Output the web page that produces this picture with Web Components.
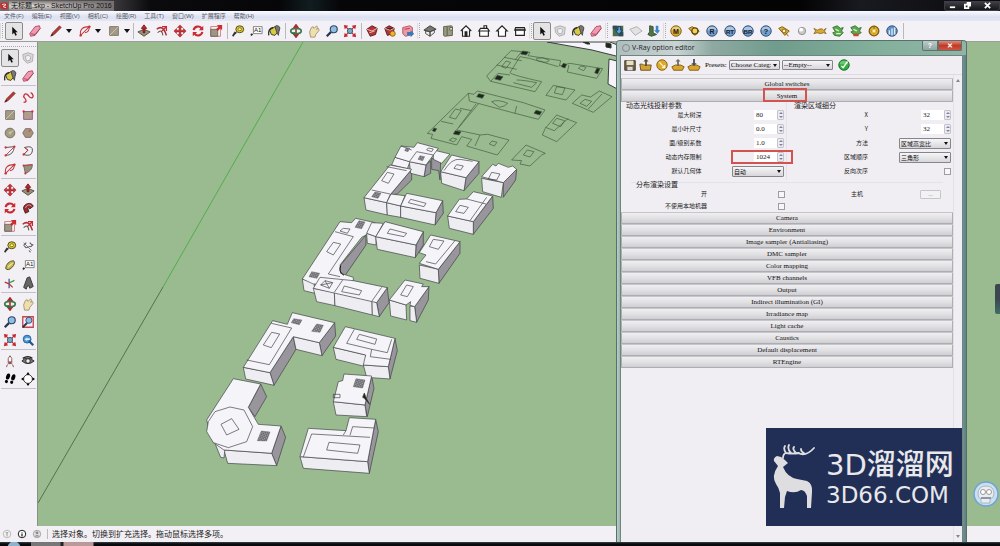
<!DOCTYPE html>
<html lang="zh-CN">
<head>
<meta charset="utf-8">
<title>无标题.skp - SketchUp Pro 2016</title>
<style>
  html, body { margin: 0; height: 100%; }
  body { font-family: "Liberation Sans", "Noto Sans CJK SC", sans-serif; overflow: hidden; background: #f0eef2; }
</style>
</head>
<body>
<sketch-app></sketch-app>
<script>
const define = (name, html, setup) => {
  const tpl = document.createElement('template');
  customElements.define(name, class extends HTMLElement {
    connectedCallback() {
      if (this.shadowRoot) return;
      this.attachShadow({ mode: 'open' });
      tpl.innerHTML = typeof html === 'function' ? html(this) : html;
      this.shadowRoot.append(tpl.content.cloneNode(true));
      if (setup) setup(this);
    }
  });
};

/* ---------- icons, drawn on a 16 x 16 grid ---------- */
const ball = (c1, c2, t, s = 8) => `<circle cx="8" cy="8" r="6" fill="${c1}" stroke="${c2}"/><path d="M3 7a5 4 0 0 1 10 0z" fill="#fff" opacity=".4"/><text x="8" y="11" font-size="${s}" font-weight="700" text-anchor="middle" fill="#1c1c20">${t}</text>`;
const gold = ['#d9ab2c', '#7d5c10'], blue = ['#6e9fd0', '#28466b'];
const tag = t => `<path d="M2 5l4-2 8 5-5 5z" fill="#dcae2d" stroke="#775610"/>${t}`;
const house = body => `<g fill="#fff" stroke="#222" stroke-width="1.3">${body}</g>`;
const ICONS = {
  select: '<path d="M6 3v9l2-2 1.600 3.400 1.700-.8L9.700 9.400h2.600z" fill="#111"/>',
  eraser: '<path d="M2 11l6-8 5-1 1 3-6 8-5 1z" fill="#ef9ab0" stroke="#a8455f"/><path d="M3 11l5 1 6-7" fill="none" stroke="#a8455f"/>',
  pencil: '<path d="M2 14l2-4 8-8 2 2-8 8z" fill="#b73a35" stroke="#6b1e1c" stroke-width=".7"/><path d="M2 14l1.500-3 1.500 1.500z" fill="#222"/>',
  free: '<path d="M3 14c4 0 3-3 1-5s0-6 3-4 2 4 5 4 2-5-1-6" fill="none" stroke="#c63239" stroke-width="1.500"/>',
  arc: '<path d="M3 13Q1 3 13 3L3 13M13 3Q13 9 8 10" fill="none" stroke="#bf3b42" stroke-width="1.200"/><circle cx="3" cy="13" r="1.400" fill="#c33"/><circle cx="13" cy="3" r="1.400" fill="#c33"/>',
  arc2: '<path d="M3 4L13 3Q12 13 3 13" fill="none" stroke="#444"/><path d="M3 13L13 3" stroke="#c33"/><circle cx="3" cy="4" r="1.300" fill="#c33"/><circle cx="3" cy="13" r="1.300" fill="#c33"/><circle cx="13" cy="3" r="1.300" fill="#c33"/>',
  arc3: '<path d="M4 4Q14 1 13 8T3 12L8 7z" fill="none" stroke="#444"/><path d="M3 12L8 7 4 4" fill="none" stroke="#c33"/><circle cx="3" cy="12" r="1.300" fill="#c33"/>',
  pie: '<path d="M3 4L13 3Q13 10 5 13z" fill="#9a9079" stroke="#666"/><path d="M3 4l10-1" stroke="#c33"/><circle cx="3" cy="4" r="1.200" fill="#c33"/><circle cx="5" cy="13" r="1.200" fill="#c33"/>',
  rect: '<path d="M3 3h10v10H3z" fill="#a39a86" stroke="#777063"/><path d="M3 13L13 3" stroke="#d4c9a6"/>',
  rrect: '<path d="M3 4h10v9H3z" fill="#aba18c" stroke="#858"/><path d="M3 4l10 9" stroke="#c87"/><circle cx="3" cy="4" r="1.300" fill="#c33"/><circle cx="13" cy="4" r="1.300" fill="#c33"/>',
  circle: '<circle cx="8" cy="8" r="5.500" fill="#a59b84" stroke="#6c665a"/><circle cx="8" cy="8" r="1.600" fill="#c9bd92"/><path d="M8 8l4-3" stroke="#ddd0a0"/>',
  polygon: '<path d="M5 3h6l3 5-3 5H5L2 8z" fill="#a39580" stroke="#7a6b5e"/><path d="M8 8l3-4" stroke="#c33"/><circle cx="8" cy="8" r="1.300" fill="#c86"/>',
  push: '<path d="M1 9l7-3 7 3-7 5z" fill="#9a917d" stroke="#4e4a40"/><path d="M8 1l3 4H9v5H7V5H5z" fill="#c4262e" stroke="#711"/>',
  offset: '<path d="M2 6Q9 0 13 13" fill="none" stroke="#b32a30" stroke-width="1.800"/><path d="M3 10Q8 5 9 13" fill="none" stroke="#555" stroke-width="1.200"/><path d="M7 9l6-6M8 3h5v5" fill="none" stroke="#c62a31" stroke-width="1.500"/>',
  move: '<path d="M8 1l3 3H9v3h3V5l3 3-3 3V9H9v3h2l-3 3-3-3h2V9H4v2L1 8l3-3v2h3V4H5z" fill="#cf2e36" stroke="#801a20" stroke-width=".5"/>',
  rotate: '<path d="M3 7a5 5 0 0 1 9-2M13 9a5 5 0 0 1-9 2" fill="none" stroke="#ca2b33" stroke-width="2.400"/><path d="M14 2v5H9zM2 14V9h5z" fill="#ca2b33"/>',
  follow: '<path d="M3 9C2 3 12 0 14 6L10 9C8 6 7 8 9 12L5 14z" fill="#9b2d31" stroke="#3b1c1c"/><path d="M5 8Q8 2 12 6" fill="none" stroke="#e8a0a0"/>',
  scale: '<path d="M2 3h11v11H2z" fill="#fff" stroke="#c66"/><path d="M2 6h8v8H2z" fill="#a0967f" stroke="#666"/><path d="M15 1v6l-2-2-3 3-2-2 3-3-2-2z" fill="#cc2a31"/>',
  tape: '<path d="M2 14l3-5 2 1z" fill="#333"/><ellipse cx="10" cy="6" rx="4.500" ry="4" fill="#dcca3c" stroke="#45400f"/><ellipse cx="10" cy="6" rx="2" ry="1.700" fill="#fff6a0" stroke="#776b10"/><path d="M5 9l-3 5" stroke="#333" stroke-width="2"/>',
  dims: '<path d="M3 6l3 3M9 12l2 2M6 3l-3 3M11 8l3-3M6 9l5-2M10 3l3 3" fill="none" stroke="#555" stroke-width="1.200"/><path d="M3 3l9 9" stroke="#777"/>',
  protract: '<path d="M3 12Q4 4 12 3q3 3-2 8-4 4-7 1z" fill="#c9ba4d" stroke="#46421e"/><path d="M6 10l5-4" stroke="#fff"/>',
  text: '<path d="M5 3h10v8H5zM5 11l-3 3" fill="#fff" stroke="#777"/><text x="10" y="9.500" font-size="7" text-anchor="middle" fill="#111">A1</text><circle cx="3" cy="12" r="1.200" fill="#222"/>',
  axes: '<path d="M7 14V3" stroke="#459" stroke-width="1.500"/><path d="M7 8l6-3" stroke="#393" stroke-width="1.500"/><path d="M7 9l-5-2M7 9l4 4" stroke="#b33" stroke-width="1.500"/>',
  text3d: '<path d="M3 13L7 2l3-1 4 11-4 2-1-3-2 1-1 3z" fill="#666" stroke="#333"/>',
  paint: '<path d="M3 7l6-4 5 4-5 6-4-1z" fill="#d8c843" stroke="#30301c"/><path d="M2 13Q1 5 7 4" fill="none" stroke="#333" stroke-width="1.600"/><path d="M9 3a3 3 0 0 1 5 4l-1 6-2-4z" fill="#777" stroke="#222" stroke-width=".7"/>',
  orbit: '<path d="M8 2v11M5 5l3-4 3 4M5 11l3 4 3-4" fill="#c33" stroke="#b5262f" stroke-width="1.800"/><ellipse cx="8" cy="8" rx="6" ry="3" fill="none" stroke="#3c7a4c" stroke-width="2"/><path d="M3 10l4 4V9z" fill="#2e7244"/>',
  pan: '<path d="M3 9l2-5 2-1 1 2 3-3 1 2-1 2 2-1 1 2-4 5-1 3-5 0z" fill="#efdfb0" stroke="#8c7c54" stroke-width=".8"/>',
  zoom: '<path d="M7 9l-5 5" stroke="#26364c" stroke-width="2.500"/><circle cx="10" cy="6" r="4" fill="#92bde2" stroke="#2d4966" stroke-width="1.300"/>',
  zoomwin: '<path d="M2 2h12v12H2z" fill="#eef" stroke="#c44" stroke-width="1.500"/><path d="M7 9l-5 5" stroke="#26364c" stroke-width="2.300"/><circle cx="9" cy="6" r="3.500" fill="#92bde2" stroke="#2d4966"/>',
  extents: '<path d="M1 1l5 1-4 4zM15 1l-1 5-4-4zM1 15l1-5 4 4zM15 15l-5-1 4-4z" fill="#c62730"/><path d="M3 3l10 10M13 3L3 13" stroke="#c62730" stroke-width="1.500"/><circle cx="8" cy="8" r="3" fill="#7ab" stroke="#357"/>',
  prev: '<circle cx="7" cy="7" r="4.500" fill="#4b9bd8" stroke="#225c93"/><path d="M9 9l5 5" stroke="#1f588c" stroke-width="2.500"/><path d="M4 7l3-2v1h3v2H7v1z" fill="#d6ecfb"/>',
  camera: '<path d="M8 2l2 3v6H6V5zM5 12l-1 3M11 12l1 3M6 9h4" fill="#fff" stroke="#7b4a4a"/><circle cx="8" cy="10" r="1.200" fill="#b33"/>',
  eye: '<path d="M1 8q6-7 14 0-7 6-14 0z" fill="#777" stroke="#222"/><circle cx="8" cy="8" r="2.600" fill="#eee" stroke="#222"/><path d="M2 5q6-4 11 0" fill="none" stroke="#222" stroke-width="1.500"/>',
  walk: '<g transform="rotate(18 8 8)"><ellipse cx="5" cy="6" rx="2.200" ry="3.600"/><circle cx="5" cy="12" r="1.800"/><ellipse cx="11" cy="5" rx="2.200" ry="3.600"/><circle cx="11" cy="11" r="1.800"/></g>',
  section: '<circle cx="8" cy="8" r="5" fill="#fff" stroke="#333"/><path d="M8 0l2 3H6zM8 16l2-3H6zM0 8l3-2v4zM16 8l-3-2v4z"/>',
  comp: '<path d="M2 4l6-2 6 2-1 8-6 2-4-4z" fill="#d8d8da" stroke="#aaa"/><path d="M5 6l4-1 2 2-1 4-4 0z" fill="#f3f3f3" stroke="#aaa"/>',
  ware: '<path d="M2 6l6-4 6 3-2 7-6 2z" fill="#b5343a" stroke="#4e1719"/><path d="M2 6l6 2 6-3M5 10l6-2" stroke="#f3c7c0" fill="none"/>',
  ware2: '<path d="M2 5l5-3 6 3-2 6-6 2z" fill="#b5343a" stroke="#4e1719"/><path d="M2 5l6 2 5-2" stroke="#f3c7c0"/><circle cx="11" cy="11" r="3" fill="#efb22f" stroke="#8b5d0b"/>',
  extw: '<path d="M2 4l8-2 3 2v8l-8 2-3-3z" fill="#ee99a4" stroke="#b54b58"/><path d="M7 9h4V7l4 4-4 4v-2H7z" fill="#3a78b8"/><path d="M4 6l6-1" stroke="#a34"/>',
  iso: '<path d="M1 7l7-5 7 4-7 3z" fill="#777a70" stroke="#333"/><path d="M3 8v3l5 3V9zM8 14l5-4V7L8 9z" fill="#efeee8" stroke="#444"/>',
  top: '<path d="M3 3l9-1 1 1v10l-9 1-1-1z" fill="#9c9c84" stroke="#55553f"/><path d="M7 3v10M10 4h3v3h-3z" fill="#eee" stroke="#55553f"/>',
  front: house('<path d="M2 8l6-6 6 6M4 7v7h8V7"/><path d="M7 9h2v5H7z" fill="#111"/>'),
  right: house('<path d="M2 8l2-3h8l2 3zM3 8h10v6H3zM8 5V2h3v3"/>'),
  back: house('<path d="M2 8l6-6 6 6h-2v6H4V8z"/>'),
  left: house('<path d="M2 7l1-3h10l1 3z" fill="#aaa"/><path d="M3 7h10v6H3z"/>'),
  map: '<path d="M2 2h12v12H2z" fill="#496b4e"/><path d="M2 2h5v4H2zM9 9h5v5H9z" fill="#2e4c58"/><path d="M8 3h3v4h2l-4 5-4-5h3z" fill="#58a5e0" stroke="#235"/>',
  plane: '<path d="M1 6l8-3 6 5-8 5z" fill="#e2e2e2" stroke="#aaa"/>',
  terrain: '<path d="M3 2l4 1v7l4 2-6 2-4-2 2-3z" fill="#4e7748" stroke="#344a2c"/><path d="M10 2h3v5h2l-3 4-4-4h2z" fill="#3f86c9"/>',
  m: ball(...gold, 'M'), r: ball(...blue, 'R'), rt: ball(...blue, 'RT', 7), br: ball(...blue, 'BR', 7), help: ball(...blue, '?', 9),
  frame: tag('<circle cx="9" cy="8" r="3.500" fill="#f2d35a" stroke="#5b430c" stroke-width="1.400"/>'),
  tag: tag('<circle cx="8" cy="8" r="2.200" fill="#fff3b8" stroke="#775610"/><path d="M10 10l3 4" stroke="#775610"/>'),
  sphere: '<circle cx="8" cy="8" r="4.200" fill="#c9c9c9" stroke="#8c8c8c"/><circle cx="7" cy="6.500" r="2.200" fill="#fff"/>',
  fish: '<path d="M1 5l4 2q5-3 7 0l3-2-2 3 2 3-3-1q-4 2-7 0l-4 1 2-3z" fill="#d8a92e" stroke="#765913" stroke-width=".8"/>',
  plant: '<path d="M2 4l5-2 4 3 3-1-2 4 2 2-4 4-6-1-2-3 3-1z" fill="#5aa84f" stroke="#37702f"/><path d="M5 6l4 2M6 11h5" stroke="#e4f6d6" stroke-width="1.500"/>',
  plant2: '<path d="M2 4l5-2 4 3 3-1-2 4 2 2-4 2H5L2 9l3-1z" fill="#5aa84f" stroke="#37702f"/><path d="M5 11h6v3H5z" fill="#c8462f"/><path d="M5 6l4 2" stroke="#e4f6d6" stroke-width="1.500"/>',
  sun: '<circle cx="8" cy="8" r="5.500" fill="#dfae2b" stroke="#7d5c10" stroke-width="1.500"/><path d="M8 2v9M5 8h6" stroke="#7d5c10"/><circle cx="8" cy="8" r="2" fill="#fff0a8"/>',
  dome: '<circle cx="8" cy="8" r="6" fill="#5e90c4" stroke="#28466b"/><path d="M5 12V7M8 13V5M11 12V4" stroke="#dce9f6" stroke-width="1.600"/>',
  save: '<path d="M2 3h12v11H2z" fill="#6f6046" stroke="#3c3427"/><path d="M4 3h8v5H4z" fill="#e8dfc3"/><path d="M5 10h6v4H5z" fill="#d8d8dc"/>',
  open: '<path d="M1 7h3l1 1h9l-1 6H2z" fill="#d2a23a" stroke="#6c4d10"/><path d="M8 1l3 3H9v5H7V4H5z" fill="#5a4c28"/>',
  reset: '<circle cx="8" cy="8" r="6" fill="#dfa92b" stroke="#805c12"/><path d="M5 5l6 6M11 8v3H8" stroke="#fff5cf" stroke-width="1.500" fill="none"/>',
  importi: '<path d="M1 10l4-2h6l4 2-2 4H3z" fill="#dba42e" stroke="#7c5810"/><path d="M8 1l3 3H9v5H7V4H5z" fill="#6f6a58"/>',
  exporti: '<path d="M1 10l4-2h6l4 2-2 4H3z" fill="#dba42e" stroke="#7c5810"/><path d="M8 9l3-3H9V1H7v5H5z" fill="#3f4a58"/>',
  ok: '<circle cx="8" cy="8" r="6" fill="#2fae3f" stroke="#13631f"/><path d="M3 7a5 4 0 0 1 10 0z" fill="#8ee08c" opacity=".6"/><path d="M5 9l2 2 5-7" fill="none" stroke="#fff" stroke-width="1.500"/>',
  geo: '<circle cx="8" cy="8" r="6" fill="#f2f2f2" stroke="#999"/><path d="M8 12V5M6 6h4" stroke="#999" stroke-width="1.500"/>',
  info: '<circle cx="8" cy="8" r="6" fill="#fff" stroke="#222" stroke-width="1.600"/><path d="M8 12V7M8 5v1" stroke="#222" stroke-width="2"/>',
  user: '<circle cx="8" cy="8" r="6" fill="#ddd" stroke="#888"/><circle cx="8" cy="6" r="2.200" fill="#888"/><path d="M4 12q4-5 8 0z" fill="#888"/>',
  app: '<path d="M1 2l6-1 8 1v12l-8 1-6-3z" fill="#c42a2f"/><path d="M4 5l6-1 2 2-5 2v2l5 1" fill="none" stroke="#fff" stroke-width="1.600"/>'
};
define('sk-icon', el => `<style>:host{display:block;width:14px;height:14px}svg{display:block;width:100%;height:100%;font-family:"Liberation Sans",sans-serif}</style><svg viewBox="0 0 16 16" aria-hidden="true">${ICONS[el.getAttribute('name')]}</svg>`);

define('tool-button', el => `
<style>
  :host { display: flex; align-items: center; }
  button { all: unset; box-sizing: border-box; width: 18px; height: 18px; display: grid; place-items: center; border-radius: 2px; }
  :host([active]) button { border: 1px solid #8a8a8a; background: #e4e4e4; }
  .drop { width: 8px; }
  .drop i { border: 3px solid transparent; border-top: 4px solid #111; border-bottom: 0; }
</style>
<button aria-label="${el.getAttribute('name')}"><sk-icon name="${el.getAttribute('name')}"></sk-icon></button>
${el.hasAttribute('drop') ? '<button class="drop" aria-label="more"><i></i></button>' : ''}`);

/* ---------- title, menu, tool bars ---------- */
define('title-bar', `
<style>
  :host { display: flex; height: 11px; align-items: center; color: #111; background: radial-gradient(ellipse at 320px 0, #26423d 0, transparent 30px), linear-gradient(90deg, #76706c 0, #4d4a4b 100px, #0b0b0e 150px, #060609 280px, #111d20 310px, #060608 340px, #030304 800px, #191a20 860px, #0a0a0d 100%); }
  sk-icon { width: 8px; height: 10px; }
  h1 { margin: 0 auto 0 1px; padding: 0 2px; font: 7px/10px "Liberation Sans", "Noto Sans CJK SC", sans-serif; background: radial-gradient(ellipse at 20px 5px, #f2eeefdd, #928c8caa 70%); white-space: nowrap; }
  nav { display: flex; border: 1px solid #3c3d42; border-top: 0; border-radius: 0 0 3px 3px; background: linear-gradient(#42434a, #15161a); }
  button { all: unset; width: 15px; height: 9px; display: grid; place-items: center; }
  button:last-child { width: 24px; }
  svg { width: 7px; height: 7px; fill: none; stroke: #fff; stroke-width: 2; }
</style>
<sk-icon name="app"></sk-icon><h1>无标题.skp - SketchUp Pro 2016</h1>
<nav><button aria-label="最小化"><svg viewBox="0 0 8 8"><path d="M1 6h6"/></svg></button><button aria-label="还原"><svg viewBox="0 0 8 8"><path d="M1 3h4v4H1zM3 1h4v4"/></svg></button><button aria-label="关闭"><svg viewBox="0 0 8 8"><path d="M1 1l6 6M7 1L1 7"/></svg></button></nav>`);

define('menu-bar', `
<style>
  :host { display: flex; gap: 8px; height: 10px; padding-left: 4px; align-items: center; background: linear-gradient(#fafbff, #dce1f2 60%, #e2e6f4); }
  a { font-size: 6px; line-height: 9px; color: #55585f; text-decoration: none; white-space: nowrap; }
</style>
${['文件(F)', '编辑(E)', '视图(V)', '相机(C)', '绘图(R)', '工具(T)', '窗口(W)', '扩展程序', '帮助(H)'].map(t => `<a href="#">${t}</a>`).join('')}`);

const tools = s => s.split(' ').map(n => {
  if (n === '|') return '<i class="sep"></i>';
  if (n === ':') return '<i class="grip"></i>';
  return `<tool-button name="${n.replace(/[*+]/, '')}" ${n.endsWith('*') ? 'active' : ''} ${n.endsWith('+') ? 'drop' : ''}></tool-button>`;
}).join('');
define('top-tools', `
<style>
  :host { display: flex; height: 20px; align-items: center; border-bottom: 1px solid #9aa099; background: #f3f1f5; padding-left: 2px; }
  .draw { display: flex; gap: 3px; margin-left: 1px; }
  .sep, .grip { width: 1px; height: 16px; margin: 0 1px 0 2px; background: #b9b8bc; }
  .grip { background: repeating-linear-gradient(#aaa 0 1px, transparent 1px 2px); box-shadow: -2px 0 #ddd; }
  .first { margin: 0 1px 0 0; }
</style>
<i class="grip first"></i><div class="draw">${tools('select* eraser pencil+ arc+ rect+')}</div>
${tools('| push offset move rotate scale | tape text paint | orbit pan zoom extents | ware ware2 extw : iso top front right back left : select* comp paint eraser : map plane terrain : m frame r rt br help tag sphere fish plant plant2 sun dome |')}`);

define('side-tools', `
<style>
  :host { display: block; box-sizing: border-box; width: 38px; padding: 4px 1px 0; border-right: 1px solid #8b9189; background: #f2f0f4; }
  div { display: grid; grid-template-columns: 18px 18px; border-bottom: 1px solid #c2c1c5; margin-bottom: 2px; }
  hr { margin: 0 0 2px; border: 0; height: 1px; background: repeating-linear-gradient(90deg, #aaa 0 1px, transparent 1px 2px); }
</style>
<hr>
<div>${tools('select* comp paint eraser')}</div>
<div>${tools('pencil free rect rrect circle polygon arc2 arc3 arc pie')}</div>
<div>${tools('move push rotate follow scale offset')}</div>
<div>${tools('tape dims protract text axes text3d')}</div>
<div>${tools('orbit pan zoom zoomwin extents prev')}</div>
<div>${tools('camera eye walk section')}</div>`);

/* ---------- model view ---------- */
const poly = (cls, list) => list.map(p => `<path class="${cls}" d="M${p}z"/>`).join('');
define('model-view', `
<style>
  :host { display: block; overflow: hidden; background: #9abb90; }
  svg { display: block; width: 100%; height: 100%; }
  path { stroke: #3c3c42; stroke-width: 2; stroke-linejoin: round; fill: none; }
  .r { fill: #f5f4f8; } .f { fill: #eeedf2; } .s { fill: #98959d; } .m { fill: #c9c7ce; } .h { fill: url(#hatch); stroke-width: 1; } .k { fill: #1f241f; stroke: #2b352b; }
  .line path { stroke: #3f5a3e; }
  .ax { stroke-width: 1; }
</style>
<svg aria-label="模型">
<defs><pattern id="hatch" width="5" height="5" patternUnits="userSpaceOnUse" patternTransform="rotate(20)"><rect width="5" height="5" fill="#a5a5a8"/><path d="M0 0h5M0 0v5" stroke="#222"/></pattern></defs>
<g transform="translate(-38 -42)">
<path class="ax" d="M303 42L163 287" style="stroke:#4fae4a"/><path class="ax" d="M163 287L38 503" style="stroke:#56704f"/>
<g class="line" transform="translate(400 40) scale(.3333)">
<path d="M260 108L333 32 390 37 384 47 482 62 478 78 510 70 608 86 590 115 502 96 507 75M360 50L388 55 475 80M360 50L330 98Q335 105 425 125L405 155 272 124 260 108M272 124L294 100 330 105M290 75L350 88M312 52L365 62M305 80L318 63 332 67 318 85zM410 55q20-6 38 6-8 10-25 3-15 0-13-9M350 120q20 0 60 8l-15 14-55-14M535 85l8-7 15 4-7 10zM365 35L345 60"/>
<path class="k" d="M362 42l6-9 17 3-6 9zM284 117l8-11 17 4-8 11zM484 80l6-10 10 3-5 11zM584 98l7-14 9 2-7 16z"/>
<path d="M438 166L460 136 525 150 498 180zM470 140l25 4-8 20-24-5zM517 190L545 165 572 171 598 153 636 170 580 217zM540 190l15-12 20 6-15 15zM606 162L565 207"/>
<path d="M82 280L205 160 222 163 232 153 370 188 435 210 415 238 345 220 350 198M205 160L208 183 345 220M235 192L170 270 240 285M228 192L175 263M82 280L98 283 93 295 170 315 185 290M200 318L292 345 327 300 263 283 240 285 225 318M180 205L215 212M123 244L160 252M148 232l18-25 18 4-17 26zM275 185q20-8 48 5-8 10-25 12zM200 318L215 298 185 290M268 312l8-9 15 4-8 11zM148 300l10-6 12 3-9 9z"/>
<path class="k" d="M230 170l6-9 17 4-6 10zM402 220l6-9 17 4-6 10zM160 282l6-10 17 3-6 10zM97 272l5-8 8 2-5 9z"/>
<path d="M427 285L436 265 470 225 530 248 470 305zM436 262L463 272 505 235M458 250l12-15 24 7-12 18zM335 360L378 315 436 340 425 345 390 378 360 372 365 362zM370 345l12-15 20 5-12 16z"/>
</g>
<path class="r" style="stroke-width:1" d="M547 42L610 42 620 46V57L592 50zM609 59l12 3v29l-13-7z"/>
<path class="k" style="stroke-width:1" d="M583 42l4 2h3l-2-2zM606 43l5 1v4l-5-1z"/>
<g transform="translate(290 130) scale(.3333)">
${poly('s', ['365 118L365 150 322 192 300 195', '408 105L422 92 422 130 402 140', '425 85L452 92 450 150 446 122 425 118', '567 95L567 130 522 182 528 143', '458 212L460 250 435 285 438 248', '640 158L680 118 677 150 640 202', '608 198L610 235 550 313 550 275', '228 315L228 345 165 437 148 430 152 405', '292 473L297 518 268 560 260 518', '400 305L400 345 376 383 378 345', '510 335L510 370 447 460 445 418', '417 470L415 510 380 577 374 530'])}
${poly('f', ['358 95L408 105 402 140 362 130', '452 125L528 143 522 182 455 160', '222 203L290 218 292 255 228 240', '290 218L332 228 332 262 292 255', '332 228L438 248 435 285 332 262', '575 145L640 158 634 202 578 185', '473 258L550 275 550 313 478 295', '37 447L72 457 75 490 42 482', '70 475L133 487 135 527 80 515', '133 487L246 513 247 555 135 527', '246 513L260 518 268 560 247 555', '230 310L258 320 258 345 232 340', '257 320L378 345 376 383 262 358', '388 405L445 418 447 460 390 445', '298 510L348 525 350 570 302 558', '360 528L374 530 380 577 360 572'])}
${poly('r', ['305 105L315 82 360 95 352 116', '430 60L480 72 455 100 430 88', '315 82L333 48 372 52 382 38 445 55 408 105 358 95', '452 125L485 75 567 95 528 143', '222 203L300 105 365 118 300 195 290 218', '290 218L303 192 345 197 332 228', '332 228L350 190 458 212 438 248', '575 140L608 103 618 108 625 100 655 112 668 108 680 118 640 158', '473 258L508 208 530 207 550 185 608 198 550 275', '37 447L150 275 185 278 197 265 255 278 228 315 215 322 150 405 152 430 190 442 190 452 148 465 70 462', '70 475L90 442 190 452 292 473 260 518', '230 310L245 278 280 280 258 320', '257 320L285 275 400 305 378 345', '388 400L408 375 388 368 422 315 510 335 445 418', '298 510L345 450 400 462 395 470 417 470 374 530 360 526 362 515 348 525'])}
<path d="M358 95L380 65 430 75M333 48L365 60M275 152L292 127 312 132 295 160zM245 180L300 192M290 110L350 122M355 218L362 208 408 220 402 230zM492 115L500 104 520 108 512 120zM462 122Q485 85 510 88L548 94M595 147L605 127 630 132 620 150zM497 245L510 226 535 232 522 250zM590 202L540 272M530 207L588 222M115 432L190 320 135 305M115 432L150 440M110 365L130 337 152 342 130 375zM150 303L160 295 180 297 172 310zM133 487L158 450M92 465L105 452 128 458 118 475zM92 465L128 458M105 452L118 475M155 485L163 468 215 482 208 495zM246 513L275 472M292 310L300 297 350 310 342 320zM418 350L430 328 462 333 445 358zM495 332L437 402 408 395M332 495L350 465 370 470 352 500zM410 60l5-6 15 3-5 8z"/>
<path class="h" d="M245 200l10-14 18 4-9 15zM384 88l6-11 14 3-6 12zM344 62l5-9 10 2-5 10zM195 292l12-20 18 4-10 20zM57 440l8-15 24 5-8 15z"/>
<path d="M152 408Q144 425 162 436" style="stroke:#111;stroke-width:3"/>
</g>
<g transform="translate(200 300) scale(.3333)">
${poly('s', ['210 218L280 110 288 148 222 256', '358 128L404 68 407 108 366 167', '182 252L200 290 165 350 145 322', '215 460L243 378 257 412 230 497', '585 115L592 152 570 237 565 200', '515 228L522 265 502 350 495 315', '527 358L535 395 508 520 503 485'])}
${poly('f', ['130 202L210 218 222 256 137 237', '280 110L358 128 366 167 288 148', '72 450L215 460 230 497 83 490', '45 430L75 445 72 474 62 472', '400 142L497 165 497 200 408 178', '490 195L565 200 570 237 500 232', '400 305L495 315 500 350 408 345', '300 470L503 485 508 520 310 505'])}
${poly('r', ['130 202L218 62 262 73 277 38 404 68 358 128 280 110 210 218', '20 360L100 236 182 252 145 322 175 373 243 378 215 460 72 450 40 428', '25 365L45 335 90 321 132 330 158 380 140 425 85 443 40 428 20 395', '400 142L436 80 585 115 565 200 490 195 497 165', '400 305L415 245 428 242 432 222 515 228 495 315', '300 470L325 385 438 392 448 353 527 358 503 485'])}
<path d="M214 70L275 84 208 194 140 180M190 135L215 97 239 102 214 143zM63 373L95 356 117 388 80 405zM463 88L440 130 515 148 511 170 572 178M515 148L562 158 575 118M478 103L530 117 525 133 470 118zM400 283L420 283 420 293 400 293zM310 471L335 402 510 412M438 392L430 405M450 406L458 380 522 384M380 450L387 427 480 435 473 460z"/>
<path class="h" d="M172 422l12-29 26 3-10 27zM335 94l15-22 20 4-10 21zM274 68l7-12 25 4-8 14zM460 260l8-24 27 4-7 24z"/>
<path class="k" d="M488 292l5-13 6 16 10 18-16-18z"/>
</g>
</g></svg>`);

/* ---------- option editor ---------- */
define('drop-list', el => `
<style>
  :host { display: inline-block; position: relative; width: 51px; }
  select { appearance: none; box-sizing: border-box; display: block; width: 100%; height: 10px; margin: 0; padding: 0 8px 0 1px; border: 1px solid #85858a; border-radius: 1px; background: linear-gradient(#f6f6f8, #d7d6da); color: #111; font: inherit; line-height: 8px; }
  :host::after { content: ""; position: absolute; right: 3px; top: 4px; border: 2px solid transparent; border-top: 3px solid #111; border-bottom: 0; pointer-events: none; }
</style><select aria-label="${el.getAttribute('label')}"><option>${el.getAttribute('value')}</option></select>`);

define('field-row', el => {
  const a = n => el.getAttribute(n) || '', kind = a('kind');
  const control = {
    spin: `<span class="spin"><input id="c" type="text" value="${a('value')}"><span class="ud"><i></i><i class="dn"></i></span></span>`,
    list: `<span class="list"><select id="c"><option>${a('value')}</option></select></span>`,
    check: '<input id="c" type="checkbox">',
    button: `<button id="c">${a('value')}</button>`
  }[kind];
  return `
<style>
  :host { display: grid; grid-template-columns: 1fr 1fr; height: 14px; align-items: center; font: 6px/10px "Noto Sans CJK SC", sans-serif; padding-right: 2px; position: relative; }
  label { text-align: right; padding-right: 1px; white-space: nowrap; color: #222; }
  .ctl { display: flex; justify-content: flex-end; }
  .spin { display: flex; width: 30px; height: 10px; background: #fff; }
  input[type=text] { box-sizing: border-box; width: 23px; height: 10px; padding: 0 2px; border: 0; margin: 0; background: none; font: 7px/10px "Liberation Serif", serif; color: #222; }
  .ud { box-sizing: border-box; width: 7px; height: 10px; border: 1px solid #c4c3cb; border-radius: 1px; background: #ecebf2; display: grid; place-items: center; }
  .ud i { border: 2px solid transparent; border-top: 0; border-bottom: 2px solid #8184a0; }
  .ud i.dn { border-bottom: 0; border-top: 2px solid #8184a0; }
  .list { position: relative; width: 52px; }
  select { appearance: none; box-sizing: border-box; display: block; width: 100%; height: 11px; padding: 0 8px 0 1px; margin: 0; border: 1px solid #85858a; border-radius: 1px; background: linear-gradient(#f6f6f8, #d7d6da); font: 6px/9px "Noto Sans CJK SC", sans-serif; color: #111; }
  .list::after { content: ""; position: absolute; right: 3px; top: 4px; border: 2px solid transparent; border-top: 3px solid #111; border-bottom: 0; }
  input[type=checkbox] { appearance: none; box-sizing: border-box; width: 7px; height: 7px; margin: 0; border: 1px solid #9d9ca2; background: #f7f6f9; }
  button { box-sizing: border-box; width: 21px; height: 9px; padding: 0; border: 1px solid #c6c5ca; border-radius: 1px; background: #f2f1f4; font: 6px/7px "Liberation Serif", serif; color: #999; }
  :host([marked])::after { content: ""; position: absolute; box-sizing: border-box; right: -7px; top: 0; width: 62px; height: 14px; border: 2px solid #d5534f; pointer-events: none; }
</style><label for="c">${a('label')}</label><span class="ctl">${control}</span>`;
});

define('roll-head', `
<style>
  :host { display: block; height: 12px; position: relative; }
  button { display: block; box-sizing: border-box; width: 100%; height: 12px; margin: 0; padding: 0; border: 1px solid #aeadb2; border-top-color: #c6c5ca; border-radius: 1px; background: linear-gradient(#efeef1, #e3e2e5 45%, #d0cfd3); font: 7px/9px "Liberation Serif", serif; color: #111; }
  :host([marked])::after { content: ""; position: absolute; box-sizing: border-box; left: calc(50% - 24px); top: -2px; width: 44px; height: 14px; border: 2px solid #d5534f; pointer-events: none; }
</style><button><slot></slot></button>`);

define('system-panel', `
<style>
  :host { display: block; position: relative; }
  .pair { display: grid; grid-template-columns: 1fr 1fr; height: 78px; }
  h3 { margin: 0; padding-left: 5px; font: 7px/6px "Noto Sans CJK SC", sans-serif; color: #222; white-space: nowrap; }
  .pair section + section h3 { padding-left: 7px; }
  .pair section:first-child { border-right: 1px solid #e3e2e7; }
  .dist { display: grid; grid-template-columns: 1fr 1fr; margin: 0 10px; height: 32px; background: linear-gradient(#e3e2e7, #e3e2e7) 0 2px / 100% 1px no-repeat; }
  .dist h3 { grid-column: span 2; line-height: 8px; }
  .dist field-row { height: 12px; }
  h3 span { background: #f0eef2; }
</style>
<div class="pair">
<section><h3>动态光线投射参数</h3>
<field-row label="最大树深" kind="spin" value="80"></field-row>
<field-row label="最小叶尺寸" kind="spin" value="0.0"></field-row>
<field-row label="面/级别系数" kind="spin" value="1.0"></field-row>
<field-row label="动态内存限制" kind="spin" value="1024" marked></field-row>
<field-row label="默认几何体" kind="list" value="自动"></field-row></section>
<section><h3>渲染区域细分</h3>
<field-row label="X" kind="spin" value="32"></field-row>
<field-row label="Y" kind="spin" value="32"></field-row>
<field-row label="方法" kind="list" value="区域高宽比"></field-row>
<field-row label="区域顺序" kind="list" value="三角形"></field-row>
<field-row label="反向次序" kind="check"></field-row></section>
</div>
<div class="dist"><h3><span>分布渲染设置</span></h3>
<field-row label="开" kind="check"></field-row><field-row label="主机" kind="button" value="..."></field-row>
<field-row label="不使用本地机器" kind="check"></field-row></div>`);

define('option-editor', `
<style>
  :host { display: flex; flex-direction: column; box-sizing: border-box; width: 351px; border: 1px solid #59706a; border-bottom: 0; border-radius: 4px 4px 0 0; padding: 0 3px; background: linear-gradient(90deg, #b9cbcb, #8db4a0 4px, #86ad98 98%, #5f7f85); }
  header { display: flex; align-items: center; height: 14px; margin: 0 -3px; padding-left: 5px; border-radius: 3px 3px 0 0; background: linear-gradient(90deg, #aebdbd, #c9d3d3 60px, #8fa9a2 95px, #6f9c8c 160px, #82b09b 260px, #92b4a6); }
  header i { width: 6px; height: 6px; border: 1px solid #888; border-radius: 50%; }
  h2 { margin: 0 auto 0 2px; font: 7px/12px "Open Sans", sans-serif; color: #1b2225; }
  header button { all: unset; width: 14px; height: 9px; align-self: start; border: 1px solid #60706e; border-top: 0; text-align: center; font: 700 7px/9px "Liberation Sans", sans-serif; color: #fff; background: linear-gradient(#bccac8, #8fa5a0); border-radius: 0 0 0 2px; }
  header .x { width: 22px; margin-right: 4px; background: linear-gradient(#df8d7c, #c23b29 50%, #ce5440); border-radius: 0 0 2px 0; }
  .body { flex: 1; min-height: 0; display: flex; flex-direction: column; background: #f0eef2; border: 1px solid #6f8580; border-bottom: 0; }
  .bar { display: flex; align-items: center; height: 18px; gap: 2px; border-bottom: 1px solid #dddce1; font: 7px/10px "Liberation Serif", serif; }
  .bar tool-button { margin-right: -4px; }
  .bar span { margin-left: 4px; }
  .bar tool-button:last-child { margin-left: 0; }
  .scroll { flex: 1; min-height: 0; display: flex; }
  .rolls { flex: 1; padding-top: 3px; min-width: 0; }
  .rail { width: 8px; border-left: 1px solid #e2e1e6; display: flex; flex-direction: column; align-items: center; justify-content: space-between; padding: 4px 0; }
  .rail i { border: 2px solid transparent; border-top: 0; border-bottom: 3px solid #888; }
  .rail i + i { border-bottom: 0; border-top: 3px solid #888; }
</style>
<header><i></i><h2>V-Ray option editor</h2><button aria-label="帮助">?</button><button class="x" aria-label="关闭">✕</button></header>
<div class="body">
<div class="bar">${tools('save open reset importi exporti')}<span>Presets:</span><drop-list label="Category" value="Choose Categ:"></drop-list><drop-list label="Preset" value="--Empty--"></drop-list>${tools('ok')}</div>
<div class="scroll"><div class="rolls"><roll-head>Global switches</roll-head><roll-head marked>System</roll-head><system-panel></system-panel>
${['Camera', 'Environment', 'Image sampler (Antialiasing)', 'DMC sampler', 'Color mapping', 'VFB channels', 'Output', 'Indirect illumination (GI)', 'Irradiance map', 'Light cache', 'Caustics', 'Default displacement', 'RTEngine'].map(t => `<roll-head>${t}</roll-head>`).join('')}
</div><div class="rail"><i></i><i></i></div></div>
</div>`);

/* ---------- logo, status, desktop bits ---------- */
define('brand-mark', `
<style>
  :host { display: flex; align-items: center; box-sizing: border-box; width: 196px; height: 98px; padding-left: 5px; background: #212f57; color: #e9e8ea; }
  svg { width: 50px; height: 66px; flex: none; }
  div { display: grid; gap: 4px; margin-left: 5px; white-space: nowrap; font-family: "DejaVu Sans", "Noto Sans CJK SC", sans-serif; }
  strong { font-size: 29px; line-height: 32px; font-weight: 500; }
  span { font-size: 23px; line-height: 20px; font-weight: 400; }
</style>
<svg viewBox="0 0 50 66" fill="#dedddf"><path d="M6 12L10 13Q13 15 17 19L12 23Q16 33 26 35L36 37Q42 40 41 48L40 64H36L36 52Q34 46 30 46Q24 50 16 47L14 53 13 64H9L9 49Q8 44 5 40Q0 32 7 22L3 17Q2 14 6 12z"/><path d="M12 14Q12 10 15 9Q22 10 28 9M15 9Q12 5 14 2M20 9Q16 5 18 1M25 9Q21 5 23 3M27 9Q35 13 43 4M33 9Q30 8 30 5" fill="none" stroke="#dedddf" stroke-width="1.800" stroke-linecap="round"/></svg>
<div><strong>3D溜溜网</strong><span>3D66.COM</span></div>`);

define('helper-face', `
<style>:host{display:block;width:26px;height:26px}svg{display:block}</style>
<svg viewBox="0 0 26 26" width="26" height="26"><circle cx="13" cy="13" r="12" fill="#c9dff2" stroke="#6fa3d2" stroke-width="1.500"/><path d="M5 13q0-8 8-8t8 8q0 4-4 5v4H8v-4q-3-1-3-5z" fill="#e9edf2" stroke="#a9b5c2"/><circle cx="10" cy="11" r="2.500" fill="#fff" stroke="#999"/><circle cx="16" cy="11" r="2.500" fill="#fff" stroke="#999"/><path d="M8 16h10v2H8z" fill="#8f99a5"/></svg>`);

define('status-bar', `
<style>
  :host { display: flex; align-items: center; height: 16px; padding-left: 2px; gap: 5px; background: #f2f0f4; font: 8px/14px "Noto Sans CJK SC", sans-serif; color: #222; }
  sk-icon { width: 10px; height: 10px; }
  p { margin: 0; border-left: 1px solid #bbb; padding-left: 4px; line-height: 10px; }
</style><sk-icon name="geo"></sk-icon><sk-icon name="info"></sk-icon><sk-icon name="user"></sk-icon><p>选择对象。切换到扩充选择。拖动鼠标选择多项。</p>`);

define('task-strip', `
<style>:host{display:block;height:4px;background:radial-gradient(circle at 14px 6px,#8fb3cc 0 6px,transparent 7px),linear-gradient(90deg,transparent 31px,#777 31px 60px,#222 61px 63px,#b99 64px 93px,transparent 94px),linear-gradient(#3b4145,#07090c 50%)}</style>`);

define('sketch-app', `
<style>
  :host { display: flex; flex-direction: column; height: 100vh; position: relative; overflow: hidden; }
  main { flex: 1; min-height: 0; display: flex; }
  model-view { flex: 1; }
  option-editor { position: absolute; right: 33px; top: 40px; bottom: 4px; }
  brand-mark { position: absolute; right: 38px; bottom: 20px; }
  helper-face { position: absolute; right: 1px; bottom: 39px; }
  .tab { position: absolute; right: 0; top: 284px; width: 5px; height: 30px; border-radius: 2px 0 0 2px; background: linear-gradient(#3b4650 50%, #3f6f66); }
</style>
<title-bar></title-bar><menu-bar></menu-bar><top-tools></top-tools>
<main><side-tools></side-tools><model-view></model-view></main>
<status-bar></status-bar><task-strip></task-strip>
<option-editor></option-editor><brand-mark></brand-mark><helper-face></helper-face><div class="tab"></div>`);
</script>
</body>
</html>
